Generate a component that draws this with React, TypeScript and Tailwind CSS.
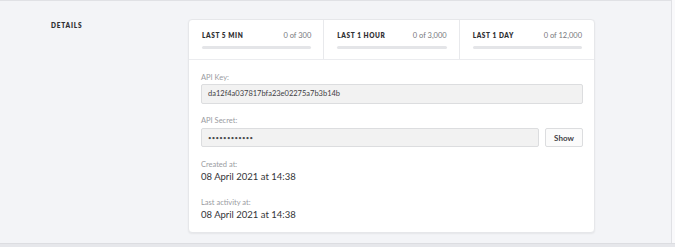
import React from "react";

const font = { fontFamily: "Lato, 'Open Sans', Arial, sans-serif" };

function Stat({ label, value, last }: { label: string; value: string; last?: boolean }) {
  return (
    <div className={`flex-1 pl-[13px] pr-[12px] pt-[11px] ${last ? "" : "border-r border-[#e8e9ec]"}`}>
      <div className="flex items-center justify-between h-[10px]">
        <span className="text-[6.5px] leading-[10px] font-extrabold tracking-[0.09em] text-[#2f3033]">{label}</span>
        <span className="text-[7.5px] leading-[10px] text-[#77787c]">{value}</span>
      </div>
      <div className="mt-[5px] h-[3px] rounded-full bg-[#e4e5e8]" />
    </div>
  );
}

function Label({ children }: { children: React.ReactNode }) {
  return <div className="text-[7.5px] leading-[10px] text-[#9a9b9f]">{children}</div>;
}

export default function App() {
  return (
    <div style={font} className="w-[675px] h-[247px] bg-[#f9f9fb] overflow-hidden">
      <div className="w-[672px] h-[243px] bg-[#f3f4f7] border-t border-r border-[#e0e1e5] flex pl-[51px] pt-[18px]">
        <div className="w-[137px] pt-[2px] text-[6.5px] leading-[10px]">
          <span className="font-extrabold tracking-[0.12em] text-[#2f3033]">DETAILS</span>
        </div>
        <div className="w-[407px] h-[214px] bg-white rounded-[4px] border border-[#e6e7ea] shadow-[0_1px_2px_rgba(0,0,0,0.06)] flex flex-col">
          <div className="flex h-[40px] border-b border-[#ebecef]">
            <Stat label="LAST 5 MIN" value="0 of 300" />
            <Stat label="LAST 1 HOUR" value="0 of 3,000" />
            <Stat label="LAST 1 DAY" value="0 of 12,000" last />
          </div>
          <div className="pl-[12px] pr-[11px] pt-[13px]">
            <Label>API Key:</Label>
            <div className="mt-[1px] h-[20px] rounded-[2px] border border-[#dcdddf] bg-[#f2f2f2] flex items-center pl-[6px] text-[7.5px] text-[#3f4043]">
              da12f4a037817bfa23e02275a7b3b14b
            </div>
            <div className="mt-[12px]">
              <Label>API Secret:</Label>
            </div>
            <div className="mt-[2px] flex gap-[6px]">
              <div className="flex-1 h-[19px] rounded-[2px] border border-[#dcdddf] bg-[#f2f2f2] flex items-center pl-[6px] text-[6px] text-[#4a4b4e] tracking-[0.05em]">
                ••••••••••••
              </div>
              <button className="w-[38px] h-[19px] rounded-[2px] border border-[#dcdddf] bg-[#fbfbfb] text-[8px] font-bold text-[#3f4043] flex items-center justify-center">
                Show
              </button>
            </div>
            <div className="mt-[13px]">
              <Label>Created at:</Label>
            </div>
            <div className="text-[9.5px] leading-[14px] text-[#333438]">08 April 2021 at 14:38</div>
            <div className="mt-[14px]">
              <Label>Last activity at:</Label>
            </div>
            <div className="text-[9.5px] leading-[14px] text-[#333438]">08 April 2021 at 14:38</div>
          </div>
        </div>
      </div>
      <div className="h-[4px] bg-[#e6e7eb] border-t border-[#dcdde1]" />
    </div>
  );
}
